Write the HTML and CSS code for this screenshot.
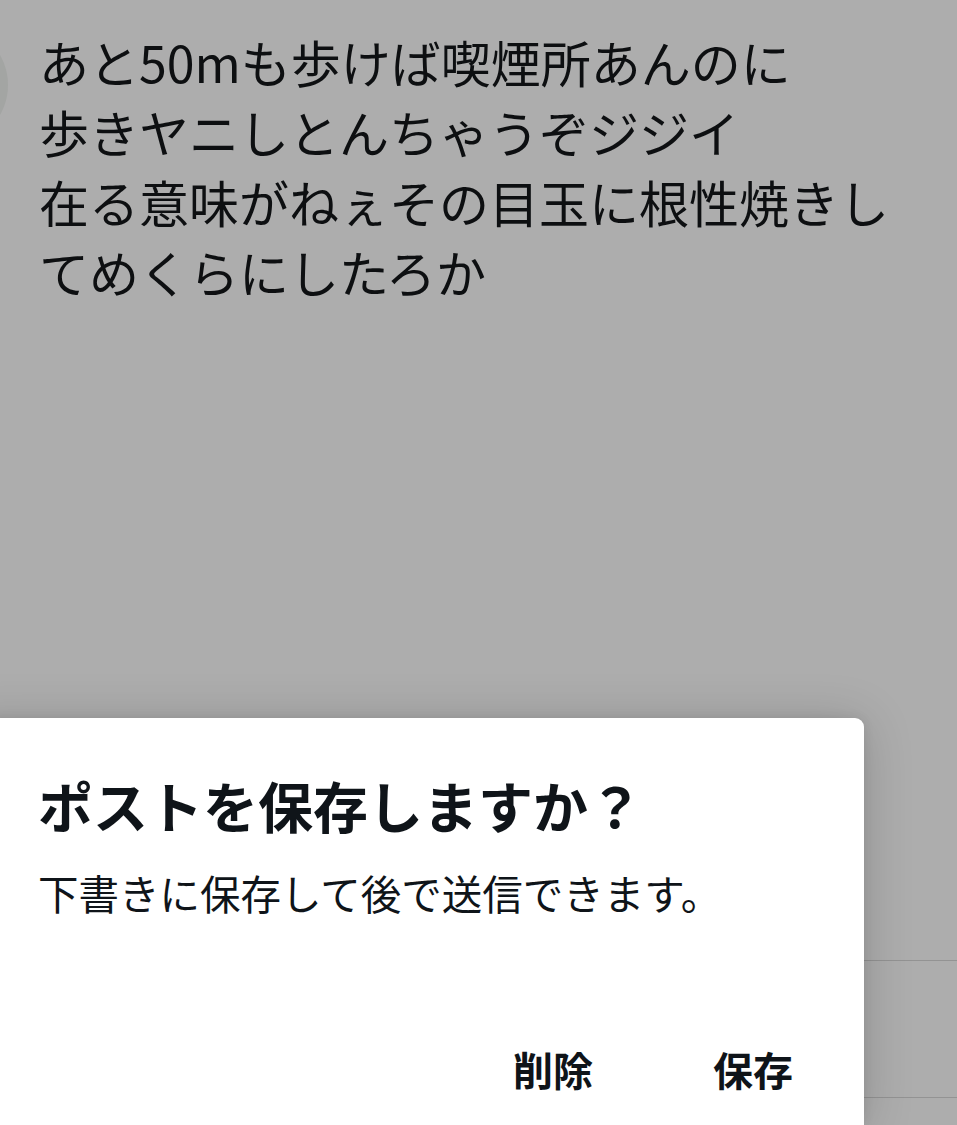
FILE: index.html
```html
<!DOCTYPE html>
<html lang="ja">
<head>
<meta charset="utf-8">
<link rel="stylesheet" href="styles.css">
</head>
<body>
<div class="screen">
  <div class="post">
    <div class="avatar"></div>
    <div class="text">あと50mも歩けば喫煙所あんのに<br>歩きヤニしとんちゃうぞジジイ<br>在る意味がねぇその目玉に根性焼きし<br>てめくらにしたろか</div>
  </div>
  <div class="bottom">
    <div class="row row-tall"></div>
    <div class="row row-short"></div>
  </div>
</div>
<div class="dialog">
  <h1 class="title">ポストを保存しますか？</h1>
  <p class="desc">下書きに保存して後で送信できます。</p>
  <div class="actions">
    <span class="btn">削除</span>
    <span class="btn">保存</span>
  </div>
</div>
</body>
</html>
```
FILE: styles.css
```css
html, body {
  margin: 0;
  padding: 0;
}
body {
  width: 957px;
  height: 1125px;
  overflow: hidden;
  background: #adadad;
  font-family: "Noto Sans CJK JP", "Noto Sans", sans-serif;
  position: relative;
}
.screen {
  height: 1125px;
  display: flex;
  flex-direction: column;
}
.post {
  display: flex;
  align-items: flex-start;
  padding-top: 26px;
}
.avatar {
  flex: none;
  width: 120px;
  height: 120px;
  border-radius: 50%;
  background: #a3a5a3;
  margin-left: -112px;
  margin-top: -1px;
}
.text {
  margin-left: 31px;
  font-size: 50px;
  line-height: 70px;
  color: #0d0f11;
  white-space: nowrap;
}
.bottom {
  margin-top: auto;
}
.row {
  border-top: 1px solid #939393;
}
.row-tall {
  height: 136px;
}
.row-short {
  height: 27px;
}
.dialog {
  position: absolute;
  top: 718px;
  left: -40px;
  width: 904px;
  height: 407px;
  background: #ffffff;
  border-radius: 9px 9px 0 0;
  box-shadow: 0 4px 50px rgba(0, 0, 0, 0.18), 0 0 12px rgba(0, 0, 0, 0.08);
  padding: 55px 0 0 78px;
  box-sizing: border-box;
  color: #0f1419;
}
.title {
  margin: 0;
  font-size: 55px;
  line-height: 62px;
  font-weight: 700;
}
.desc {
  margin: 30px 0 0;
  font-size: 40.5px;
  line-height: 56px;
  font-weight: 400;
}
.actions {
  display: flex;
  justify-content: flex-end;
  gap: 120px;
  margin-top: 120px;
  padding-right: 71px;
}
.btn {
  font-size: 40px;
  line-height: 56px;
  font-weight: 700;
}
```
